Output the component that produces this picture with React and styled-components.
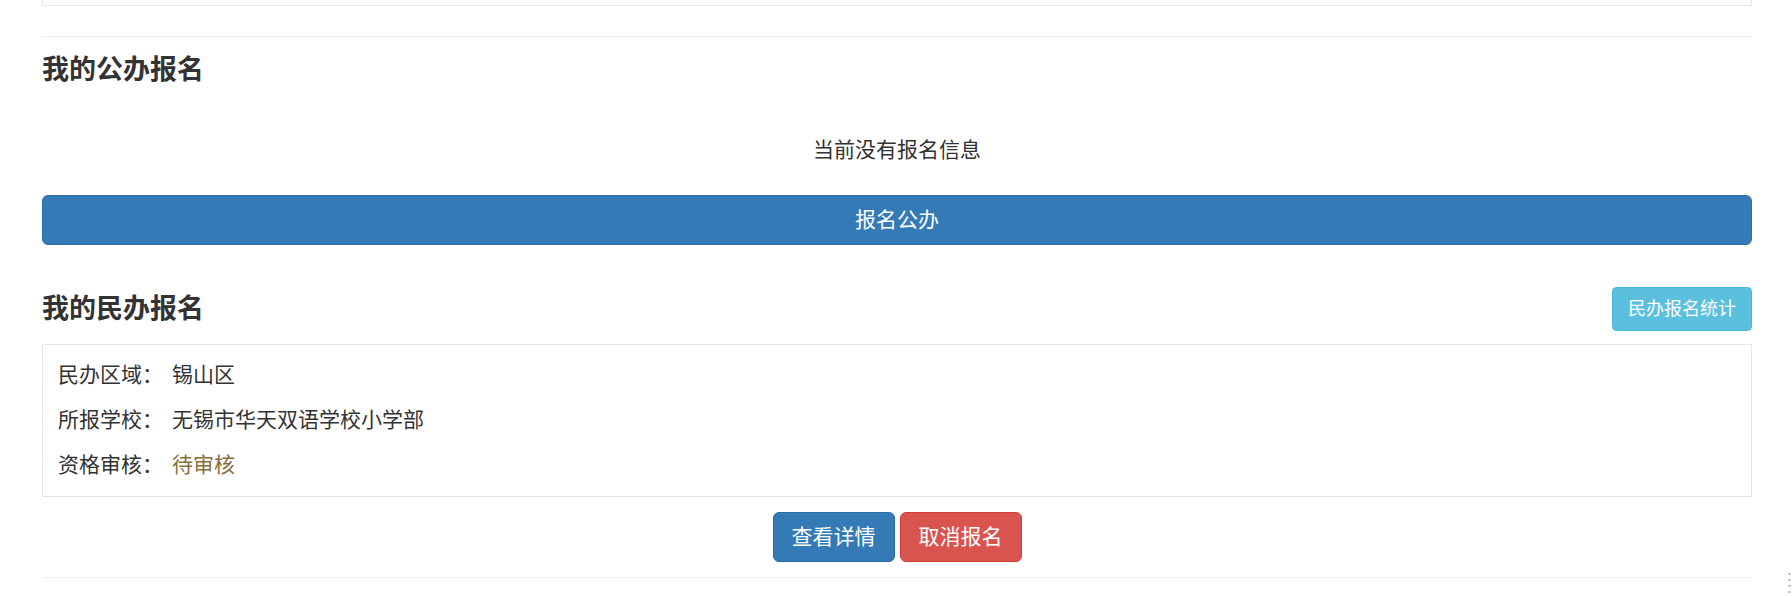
import React from "react";
import styled, { createGlobalStyle } from "styled-components";

const GlobalStyle = createGlobalStyle`
  html, body {
    margin: 0;
    padding: 0;
    background: #fff;
  }
  body {
    font-family: "Liberation Sans", "Noto Sans CJK SC", sans-serif;
    font-size: 21px;
    line-height: 30px;
    color: #333;
  }
`;

const Page = styled.div`
  position: relative;
  padding: 0 40px 0 42px;
  overflow: hidden;
`;

const TopCard = styled.div`
  height: 6px;
  box-sizing: border-box;
  border: 1px solid #e6e6e6;
  border-top: 0;
`;

const Rule = styled.hr`
  margin: ${(p) => p.$top || 30}px 0 ${(p) => p.$bottom || 0}px;
  border: 0;
  border-top: 1px solid #eee;
  height: 0;
`;

const Title = styled.h4`
  margin: ${(p) => p.$top || 0}px 0 0;
  font-size: 27px;
  line-height: 30px;
  font-weight: bold;
  color: #333;
`;

const Empty = styled.p`
  margin: 50px 0 0;
  text-align: center;
`;

const Btn = styled.button`
  display: inline-block;
  box-sizing: border-box;
  font-family: inherit;
  font-size: 21px;
  line-height: 30px;
  padding: 9px 18px;
  border: 1px solid;
  border-radius: 6px;
  color: #fff;
  cursor: pointer;
  background: ${(p) => (p.$kind === "danger" ? "#d9534f" : "#337ab7")};
  border-color: ${(p) => (p.$kind === "danger" ? "#d43f3a" : "#2e6da4")};
`;

const BlockBtn = styled(Btn)`
  display: block;
  width: 100%;
  margin-top: 30px;
  height: 50px;
`;

const SmallBtn = styled(Btn)`
  font-size: 18px;
  line-height: 27px;
  padding: 7.5px 15px;
  border-radius: 4.5px;
  background: #5bc0de;
  border-color: #46b8da;
`;

const HeadRow = styled.div`
  display: flex;
  justify-content: space-between;
  align-items: flex-start;
  margin-top: 42px;
  height: 44px;
`;

const Info = styled.div`
  margin-top: 13px;
  border: 1px solid #e6e6e6;
  padding: 15px 15px 1px;
`;

const Line = styled.p`
  display: flex;
  margin: 0 0 15px;
`;

const Label = styled.span`
  width: 114px;
  flex-shrink: 0;
`;

const Value = styled.span`
  color: ${(p) => (p.$warn ? "#8a6d3b" : "#333")};
`;

const Actions = styled.div`
  display: flex;
  justify-content: center;
  gap: 5px;
  margin-top: 15px;
`;

const Grip = styled.div`
  position: absolute;
  right: 1px;
  bottom: 3px;
  width: 3px;
  height: 32px;
  background: repeating-linear-gradient(
    to bottom,
    #c8c8c8 0,
    #c8c8c8 2px,
    transparent 2px,
    transparent 6px
  );
`;

const rows = [
  { label: "民办区域：", value: "锡山区" },
  { label: "所报学校：", value: "无锡市华天双语学校小学部" },
  { label: "资格审核：", value: "待审核", warn: true },
];

export default function App() {
  return (
    <>
      <GlobalStyle />
      <Page>
        <TopCard />
        <Rule $top={30} />
        <Title $top={18}>我的公办报名</Title>
        <Empty>当前没有报名信息</Empty>
        <BlockBtn>报名公办</BlockBtn>
        <HeadRow>
          <Title $top={7}>我的民办报名</Title>
          <SmallBtn>民办报名统计</SmallBtn>
        </HeadRow>
        <Info>
          {rows.map((r) => (
            <Line key={r.label}>
              <Label>{r.label}</Label>
              <Value $warn={r.warn}>{r.value}</Value>
            </Line>
          ))}
        </Info>
        <Actions>
          <Btn>查看详情</Btn>
          <Btn $kind="danger">取消报名</Btn>
        </Actions>
        <Rule $top={15} $bottom={30} />
        <Grip />
      </Page>
    </>
  );
}
